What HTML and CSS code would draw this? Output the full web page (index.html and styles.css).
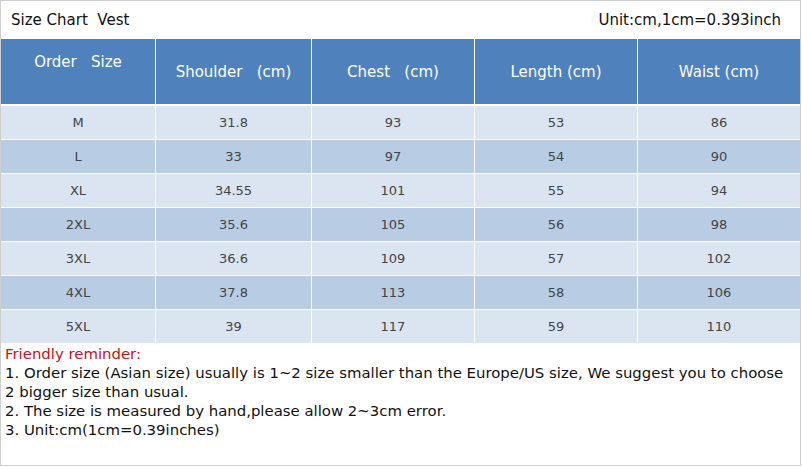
FILE: index.html
```html
<!DOCTYPE html>
<html>
<head>
<meta charset="utf-8">
<link rel="stylesheet" href="styles.css">
</head>
<body>
<div class="sheet">
  <div class="title-bar">
    <span class="title">Size Chart&nbsp; Vest</span>
    <span class="unit">Unit:cm,1cm=0.393inch</span>
  </div>
  <div class="chart">
    <div class="hcell hcell-first">Order&nbsp;&nbsp; Size</div>
    <div class="hcell">Shoulder&nbsp;&nbsp; (cm)</div>
    <div class="hcell">Chest&nbsp;&nbsp; (cm)</div>
    <div class="hcell">Length (cm)</div>
    <div class="hcell">Waist (cm)</div>
    <div class="gap-row"></div>

    <div class="cell light">M</div><div class="cell light">31.8</div><div class="cell light">93</div><div class="cell light">53</div><div class="cell light">86</div>
    <div class="cell dark">L</div><div class="cell dark">33</div><div class="cell dark">97</div><div class="cell dark">54</div><div class="cell dark">90</div>
    <div class="cell light">XL</div><div class="cell light">34.55</div><div class="cell light">101</div><div class="cell light">55</div><div class="cell light">94</div>
    <div class="cell dark">2XL</div><div class="cell dark">35.6</div><div class="cell dark">105</div><div class="cell dark">56</div><div class="cell dark">98</div>
    <div class="cell light">3XL</div><div class="cell light">36.6</div><div class="cell light">109</div><div class="cell light">57</div><div class="cell light">102</div>
    <div class="cell dark">4XL</div><div class="cell dark">37.8</div><div class="cell dark">113</div><div class="cell dark">58</div><div class="cell dark">106</div>
    <div class="cell light">5XL</div><div class="cell light">39</div><div class="cell light">117</div><div class="cell light">59</div><div class="cell light">110</div>
  </div>
  <div class="notes">
    <div class="notes-head">Friendly reminder:</div>
    <div>1. Order size (Asian size) usually is 1~2 size smaller than the Europe/US size, We suggest you to choose</div>
    <div>2 bigger size than usual.</div>
    <div>2. The size is measured by hand,please allow 2~3cm error.</div>
    <div>3. Unit:cm(1cm=0.39inches)</div>
  </div>
</div>
</body>
</html>
```

FILE: styles.css
```css
html, body {
  margin: 0;
  padding: 0;
  background: #ffffff;
}
body {
  width: 802px;
  height: 469px;
  overflow: hidden;
  font-family: "DejaVu Sans", Verdana, sans-serif;
}
.sheet {
  width: 799px;
  height: 464px;
  border: 1px solid #cfcfcf;
  display: flex;
  flex-direction: column;
}
.title-bar {
  height: 38px;
  display: flex;
  align-items: center;
  justify-content: space-between;
  padding: 0 19px 0 10px;
  font-size: 15px;
  color: #111;
}
.chart {
  display: grid;
  grid-template-columns: 154px 155px 162px 162px 162px;
  grid-template-rows: 65px 0px repeat(7, 33px);
  column-gap: 1px;
  row-gap: 1px;
  background: #ffffff;
}
.hcell {
  background: #4f81bd;
  color: #ffffff;
  font-size: 15px;
  display: flex;
  align-items: center;
  justify-content: center;
}
.hcell-first {
  align-items: flex-start;
  padding-top: 14px;
}
.gap-row {
  grid-column: 1 / -1;
  background: #ffffff;
}
.cell {
  display: flex;
  align-items: center;
  justify-content: center;
  font-size: 13px;
  color: #444;
  padding-bottom: 1px;
}
.light { background: #dbe5f1; }
.dark { background: #b8cce4; }
.notes {
  flex: 1;
  padding: 2px 0 0 4px;
  font-size: 14.9px;
  line-height: 19px;
  color: #111;
}
.notes-head {
  color: #c8101e;
}
```
